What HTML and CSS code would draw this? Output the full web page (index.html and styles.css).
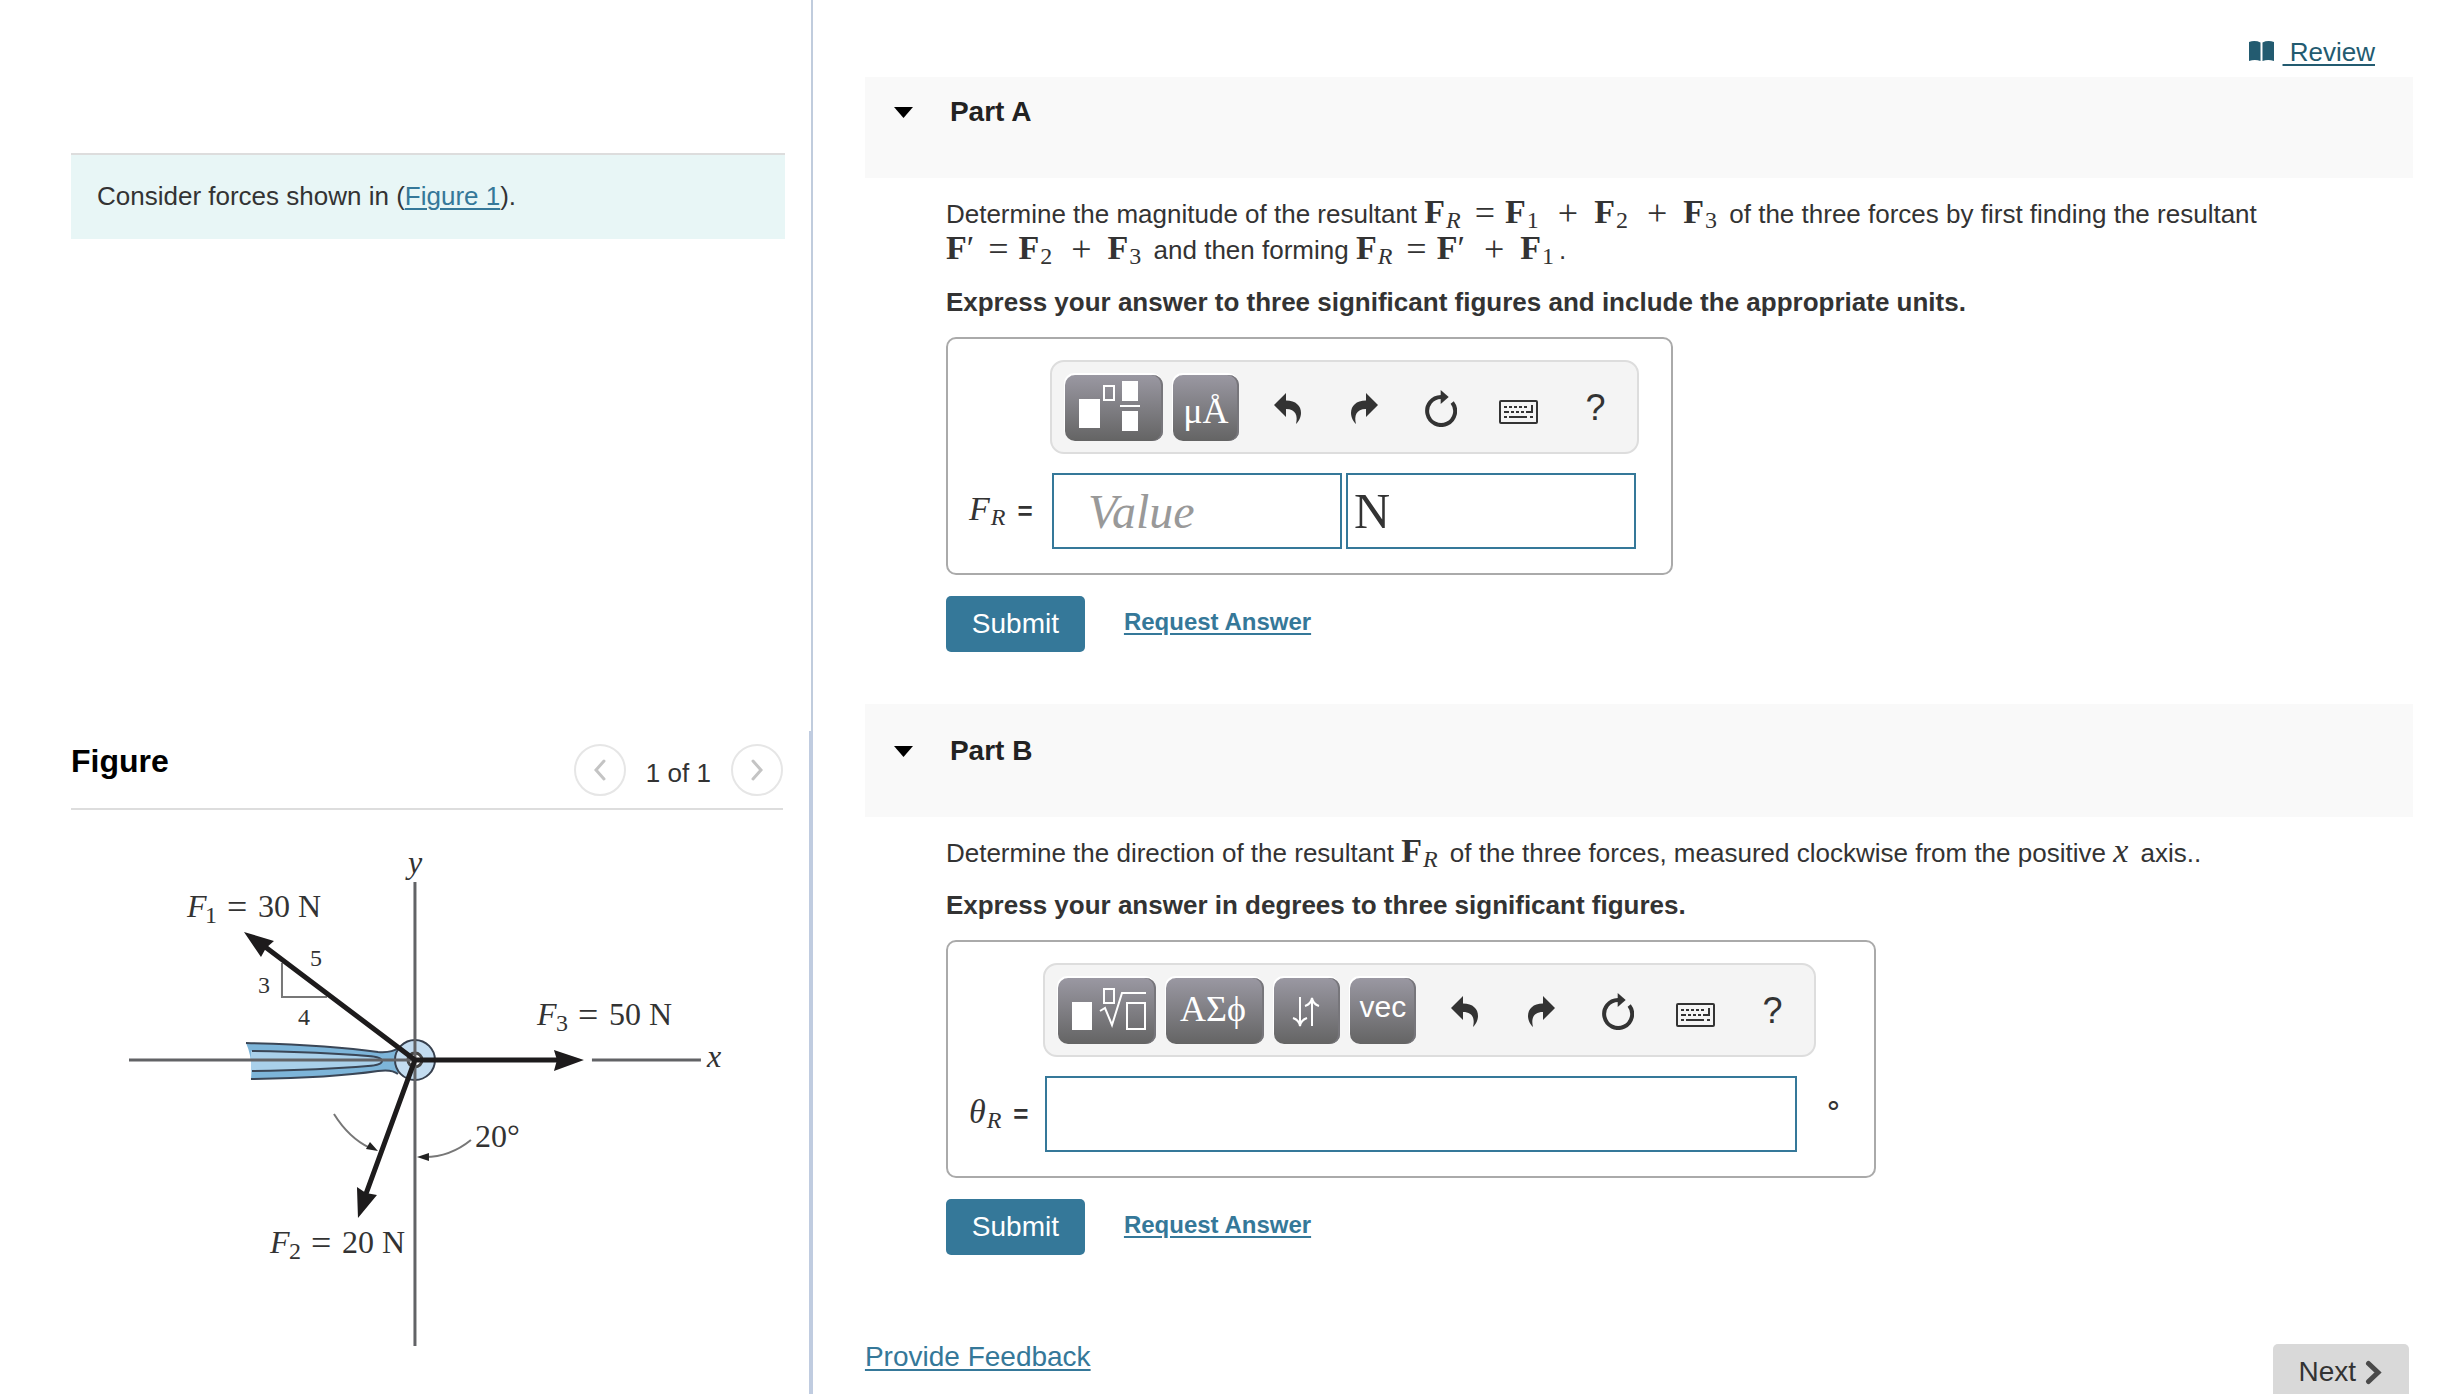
FILE: index.html
```html
<!DOCTYPE html>
<html lang="en">
  <head>
    <meta charset="UTF-8" />
    <title>Resultant of three forces</title>
    <link rel="stylesheet" href="styles.css">
  </head>
  <body>
    <!-- shared toolbar icons -->
    <svg class="sprite" aria-hidden="true">
      <symbol id="undo" viewBox="0 0 27 31">
        <path d="M0 12 L12 0 V7.5 C22 7.5 27 13 27 20 C27 25 24 29 22 31 C24 23 22 16 12 16 V24 Z" />
      </symbol>
      <symbol id="redo" viewBox="0 0 27 31">
        <path d="M27 12 L15 0 V7.5 C5 7.5 0 13 0 20 C0 25 3 29 5 31 C3 23 5 16 15 16 V24 Z" />
      </symbol>
      <symbol id="reset" viewBox="0 0 32 37">
        <path d="M27.2 12.4 A14 14 0 1 1 16 7" fill="none" stroke="#333" stroke-width="4" />
        <path d="M15.7 0 L23.7 7 L15.7 14 Z" />
      </symbol>
      <symbol id="keyboard" viewBox="0 0 39 24">
        <rect x="1" y="1" width="37" height="22" rx="1" fill="none" stroke="#333" stroke-width="2" />
        <path d="M5 7h3M10 7h3M15 7h3M20 7h3M25 7h3M5 12h5M12 12h3M17 12h3M22 12h3M27 12h7M5 17h3M10 17h18M31 17h3M33 5v7" fill="none" stroke="#333" stroke-width="2" />
      </symbol>
    </svg>

    <div class="page">
      <div class="left">
        <section class="intro">
          <p class="given">Consider forces shown in (<a href="#figure">Figure 1</a>).</p>
        </section>

        <section class="figure" id="figure">
          <div class="figure-head">
            <h2>Figure</h2>
            <div class="pager">
              <button type="button" aria-label="Previous figure"><svg width="12" height="22" viewBox="0 0 12 22"><path d="M10 2 L2 11 L10 20" /></svg></button>
              <span>1 of 1</span>
              <button type="button" aria-label="Next figure"><svg width="12" height="22" viewBox="0 0 12 22"><path d="M2 2 L10 11 L2 20" /></svg></button>
            </div>
          </div>

          <svg class="diagram" viewBox="71 840 712 520" role="img" aria-label="Three forces acting on a ring">
            <!-- eye bar -->
            <path d="M246 1043 Q330 1045 378 1052 Q392 1053 398 1048 V1074 Q392 1069 378 1071 Q330 1078 251 1079 Q253 1058 246 1043 Z" fill="#7db5d9" />
            <path d="M251 1051 Q320 1052 368 1057 Q382 1058 382 1061 Q382 1065 368 1066 Q320 1070 251 1071 Z" fill="#a9d0ea" />
            <path d="M246 1043 Q330 1045 378 1052 Q392 1053 398 1048 M398 1074 Q392 1069 378 1071 Q330 1078 251 1079 M252 1051 Q320 1052 368 1056 Q382 1057 382 1061 Q382 1065 368 1066 Q320 1070 252 1071" fill="none" stroke="#3a4656" stroke-width="2" />
            <circle cx="415" cy="1060" r="20" fill="#c3dcf0" stroke="#37404e" stroke-width="2" />
            <circle cx="415" cy="1060" r="7" fill="#fff" stroke="#444" stroke-width="3" />
            <!-- axes -->
            <path d="M415 882 V1346 M129 1060 H415 M592 1060 H701" fill="none" stroke="#626366" stroke-width="3" />
            <!-- slope triangle -->
            <path d="M282 963 V997 H327" fill="none" stroke="#777" stroke-width="2" />
            <!-- forces -->
            <path d="M415 1060 L264 946 M415 1060 H558 M415 1060 L366 1194" fill="none" stroke="#1d1b1c" stroke-width="5" />
            <path d="M244 932 L274 941 L266 948 L261 957 Z M584 1060 L554 1050 L557 1060 L554 1071 Z M358 1218 L357 1187 L366 1193 L377 1195 Z" fill="#1d1b1c" />
            <!-- angle marks -->
            <path d="M334 1114 Q349 1138 370 1148 M471 1140 Q450 1157 425 1157" fill="none" stroke="#777" stroke-width="2" />
            <path d="M378 1151 L366 1149 L370 1142 Z M417 1157 L429 1153 V1161 Z" fill="#222" />
            <g class="labels">
              <text x="408" y="873" class="it">y</text>
              <text x="707" y="1067" class="it">x</text>
              <text x="187" y="917" class="it">F</text><text x="205" y="923" class="sub">1</text>
              <text x="227" y="919" class="eq">=</text><text x="258" y="917">30 N</text>
              <text x="537" y="1025" class="it">F</text><text x="556" y="1031" class="sub">3</text>
              <text x="578" y="1027" class="eq">=</text><text x="609" y="1025">50 N</text>
              <text x="270" y="1253" class="it">F</text><text x="289" y="1259" class="sub">2</text>
              <text x="311" y="1255" class="eq">=</text><text x="342" y="1253">20 N</text>
              <text x="475" y="1147">20°</text>
              <text x="310" y="966" class="sub">5</text>
              <text x="258" y="993" class="sub">3</text>
              <text x="298" y="1025" class="sub">4</text>
            </g>
          </svg>
        </section>
      </div>

      <main class="right">
        <div class="topbar">
          <svg width="25" height="21" viewBox="0 0 25 21"><path d="M0 1 Q6 -1 11.500 1.500 V20 Q6 18 0 20 Z M25 1 Q19 -1 13.500 1.500 V20 Q19 18 25 20 Z" fill="#235b70" /></svg>
          <a href="#review">&nbsp;Review</a>
        </div>

        <section class="part">
          <h3 class="part-head">
            <svg width="21" height="13" viewBox="0 0 21 13"><path d="M1 1 H20 L10.500 12 Z" /></svg>
            Part A
          </h3>
          <div class="part-body">
            <p>
              Determine the magnitude of the resultant
              <span class="math"><b>F</b><i class="sb">R</i><span class="eq">=</span><b>F</b><span class="sb">1</span><span class="plus">+</span><b>F</b><span class="sb">2</span><span class="plus">+</span><b>F</b><span class="sb">3</span></span>
              of the three forces by first finding the resultant
              <span class="math"><b>F</b><span class="prime">′</span><span class="eq">=</span><b>F</b><span class="sb">2</span><span class="plus">+</span><b>F</b><span class="sb">3</span></span>
              and then forming
              <span class="math"><b>F</b><i class="sb">R</i><span class="eq">=</span><b>F</b><span class="prime">′</span><span class="plus">+</span><b>F</b><span class="sb">1</span></span>.
            </p>
            <p class="note">Express your answer to three significant figures and include the appropriate units.</p>

            <div class="answer answer-a">
              <div class="toolbar">
                <button type="button" class="tool wide" aria-label="Templates">
                  <svg width="98" height="66" viewBox="0 0 98 66"><path d="M14 24h21v29h-21zM57 6h16v20h-16zM55 30h20v2h-20zM57 36h16v20h-16z" fill="#fff" /><rect x="39" y="11" width="10" height="14" fill="none" stroke="#fff" stroke-width="2" /></svg>
                </button>
                <button type="button" class="tool units">μÅ</button>
                <button type="button" class="icon" aria-label="Undo"><svg width="27" height="31"><use href="#undo" /></svg></button>
                <button type="button" class="icon" aria-label="Redo"><svg width="27" height="31"><use href="#redo" /></svg></button>
                <button type="button" class="icon" aria-label="Reset"><svg width="32" height="37"><use href="#reset" /></svg></button>
                <button type="button" class="icon low" aria-label="Keyboard shortcuts"><svg width="39" height="24"><use href="#keyboard" /></svg></button>
                <button type="button" class="icon">?</button>
              </div>
              <label for="value"><i>F</i><i class="sb">R</i><span class="is">=</span></label>
              <div class="fields">
                <input type="text" id="value" class="value" placeholder="Value" />
                <input type="text" id="units" value="N" aria-label="Units" />
              </div>
            </div>

            <div class="actions">
              <button type="button" class="submit">Submit</button>
              <a href="#answer-a">Request Answer</a>
            </div>
          </div>
        </section>

        <section class="part">
          <h3 class="part-head tall">
            <svg width="21" height="13" viewBox="0 0 21 13"><path d="M1 1 H20 L10.500 12 Z" /></svg>
            Part B
          </h3>
          <div class="part-body">
            <p>
              Determine the direction of the resultant
              <span class="math"><b>F</b><i class="sb">R</i></span>
              of the three forces, measured clockwise from the positive <i class="math">x</i> axis..
            </p>
            <p class="note">Express your answer in degrees to three significant figures.</p>

            <div class="answer answer-b">
              <div class="toolbar">
                <button type="button" class="tool wide" aria-label="Templates">
                  <svg width="98" height="66" viewBox="0 0 98 66"><path d="M14 24h20v28h-20z" fill="#fff" /><path d="M46 11h10v14h-10zM69 25h18v26h-18zM42 33L47 30L54 47L64 15H88" fill="none" stroke="#fff" stroke-width="2" /></svg>
                </button>
                <button type="button" class="tool wide greek">ΑΣϕ</button>
                <button type="button" class="tool" aria-label="Arrows">
                  <svg width="66" height="66" viewBox="0 0 66 66"><path d="M26 19V47M19 40Q25 42 26 48Q27 42 33 40M38 48V20M31 28Q37 26 38 20Q39 26 45 28" fill="none" stroke="#fff" stroke-width="2" /></svg>
                </button>
                <button type="button" class="tool vec">vec</button>
                <button type="button" class="icon" aria-label="Undo"><svg width="27" height="31"><use href="#undo" /></svg></button>
                <button type="button" class="icon" aria-label="Redo"><svg width="27" height="31"><use href="#redo" /></svg></button>
                <button type="button" class="icon" aria-label="Reset"><svg width="32" height="37"><use href="#reset" /></svg></button>
                <button type="button" class="icon low" aria-label="Keyboard shortcuts"><svg width="39" height="24"><use href="#keyboard" /></svg></button>
                <button type="button" class="icon">?</button>
              </div>
              <label for="theta"><i>θ</i><i class="sb">R</i><span class="is">=</span></label>
              <div class="fields">
                <input type="text" id="theta" class="full" />
                <span class="unit">∘</span>
              </div>
            </div>

            <div class="actions">
              <button type="button" class="submit">Submit</button>
              <a href="#answer-b">Request Answer</a>
            </div>
          </div>
        </section>

        <footer class="bottom">
          <a href="#feedback">Provide Feedback</a>
          <button type="button" class="next">Next <svg width="17" height="25" viewBox="0 0 17 25"><path d="M3.500 3.500 L13 12.500 L3.500 21.500" /></svg></button>
        </footer>
      </main>
    </div>
  </body>
</html>
```
FILE: styles.css
```css
* {
  box-sizing: border-box;
}
body {
  margin: 0;
  font-family: "Liberation Sans", Arial, sans-serif;
  font-size: 26px;
  line-height: 36px;
  color: #333;
  background: #fff;
}
p,
h2,
h3 {
  margin: 0;
}
button {
  font-family: inherit;
  padding: 0;
  border: 0;
  color: inherit;
  background: none;
}
a {
  color: #357899;
  text-underline-offset: 3px;
  text-decoration-thickness: 2px;
}
.sprite {
  display: none;
}
.page {
  display: grid;
  grid-template-columns: 33.1% 1fr;
  height: 100vh;
  overflow: hidden;
}

/* left side */
.left {
  display: flex;
  flex-direction: column;
}
.intro {
  height: 731px;
  padding: 153px 26px 0 71px;
  border-right: 2px solid #c0ccdd;
}
.given {
  padding: 23px 26px 25px;
  border-top: 2px solid #ddd;
  background: #e8f6f6;
}
.figure {
  flex: 1;
  padding: 13px 26px 0 71px;
  border-right: 4px solid #c0cce0;
}
.figure-head {
  display: flex;
  justify-content: space-between;
  height: 66px;
  border-bottom: 2px solid #ddd;
}
.figure-head h2 {
  font-size: 32px;
  line-height: 34px;
  color: #000;
}
.pager {
  display: flex;
  gap: 20px;
}
.pager span {
  padding-top: 11px;
}
.pager button {
  display: flex;
  align-items: center;
  justify-content: center;
  width: 52px;
  height: 52px;
  border: 2px solid #e6e6e6;
  border-radius: 50%;
}
.pager path {
  fill: none;
  stroke: #c4c4c4;
  stroke-width: 3;
  stroke-linecap: round;
}
.diagram {
  display: block;
  width: 100%;
  margin-top: 30px;
}
.labels {
  font-family: "Liberation Serif", serif;
  font-size: 32px;
  fill: #333;
}
.labels .it {
  font-style: italic;
}
.labels .sub {
  font-size: 24px;
}
.labels .eq {
  font-size: 36px;
}

/* right side */
.right {
  padding: 0 43px 0 52px;
}
.topbar {
  display: flex;
  align-items: flex-start;
  justify-content: flex-end;
  gap: 9px;
  height: 77px;
  padding: 34px 38px 0 0;
}
.topbar svg {
  margin-top: 7px;
}
.topbar a {
  color: #235b70;
}
.part {
  margin-bottom: 52px;
}
.part-head {
  display: flex;
  align-items: center;
  gap: 36px;
  padding: 18px 28px 49px;
  font-size: 28px;
  line-height: 34px;
  color: #222;
  background: #f9f9f9;
}
.part-head.tall {
  padding-top: 30px;
}
.part-body {
  padding: 18px 0 0 81px;
}
.note {
  margin: 16px 0 17px;
  font-weight: bold;
}

/* formulas */
.math,
.answer label {
  margin-right: 5px;
  font-family: "Liberation Serif", serif;
  font-size: 34px;
  line-height: 0;
  white-space: nowrap;
}
.sb {
  margin-left: 1px;
  font-size: 24px;
  vertical-align: -5px;
}
.math .eq,
.math .plus {
  margin: 0 10px 0 14px;
  font-size: 36px;
  vertical-align: -2px;
}
.math .plus {
  margin: 0 16px 0 19px;
}

.answer {
  display: grid;
  grid-template-columns: 102px auto;
  row-gap: 19px;
  width: fit-content;
  padding: 21px 32px 24px 0;
  border: 2px solid #aaa;
  border-radius: 10px;
}
.answer-b {
  grid-template-columns: 95px auto;
}
.toolbar {
  display: flex;
  grid-column: 2;
  justify-self: start;
  padding: 13px 3px 11px 13px;
  border: 2px solid #ddd;
  border-radius: 14px;
  background: #f4f4f4;
}
.tool {
  width: 66px;
  height: 66px;
  margin-right: 10px;
  border-radius: 10px;
  font-size: 36px;
  color: #fff;
  background: linear-gradient(#9a98a2, #646464);
  box-shadow: -1px -2px 0 #fff, inset -2px 0 0 #77767b;
}
.tool.wide {
  width: 98px;
}
.tool svg {
  display: block;
}
.tool.units,
.tool.greek {
  font-family: "Liberation Serif", serif;
}
.tool.units {
  padding-top: 6px;
}
.tool.greek {
  padding: 0 4px 4px 0;
}
.tool.vec {
  padding-bottom: 8px;
  font-size: 30px;
}
.icon {
  display: flex;
  align-items: center;
  justify-content: center;
  width: 77px;
  height: 66px;
  font-size: 36px;
  fill: #333;
}
.icon.low {
  padding-top: 8px;
}
.answer label {
  margin: 0;
  padding: 18px 0 0 21px;
  line-height: 36px;
}
.answer .sb {
  line-height: 0;
}
.is {
  margin-left: 12px;
  font-family: "Liberation Sans", Arial, sans-serif;
  font-size: 26px;
  font-weight: bold;
}
.fields {
  display: flex;
  gap: 4px;
  padding-left: 2px;
}
.fields input {
  width: 290px;
  height: 76px;
  padding: 0 6px;
  border: 2px solid #357899;
  font-family: "Liberation Serif", serif;
  font-size: 50px;
  color: #333;
  background: #fff;
}
.fields .value {
  padding-left: 34px;
  font-style: italic;
  font-size: 48px;
}
.fields input::placeholder {
  color: #999;
}
.fields .full {
  width: 752px;
}
.answer-b .fields {
  gap: 27px;
}
.unit {
  width: 18px;
  padding-top: 11px;
  font-size: 30px;
}

.actions {
  display: flex;
  gap: 39px;
  padding-top: 21px;
}
.actions a {
  padding-top: 8px;
  font-size: 24px;
  font-weight: bold;
}
.submit {
  width: 139px;
  height: 56px;
  border-radius: 5px;
  font-size: 28px;
  color: #fff;
  background: #357899;
}

.bottom {
  display: flex;
  align-items: flex-start;
  justify-content: space-between;
  margin-top: 84px;
  font-size: 28px;
}
.next {
  display: flex;
  align-items: center;
  gap: 9px;
  height: 56px;
  margin: 5px 4px 0 0;
  padding: 0 27px 0 25px;
  border-radius: 5px;
  font-size: 28px;
  background: #d9d9d9;
}
.next path {
  fill: none;
  stroke: #4a4a4a;
  stroke-width: 5;
  stroke-linecap: round;
}
```
